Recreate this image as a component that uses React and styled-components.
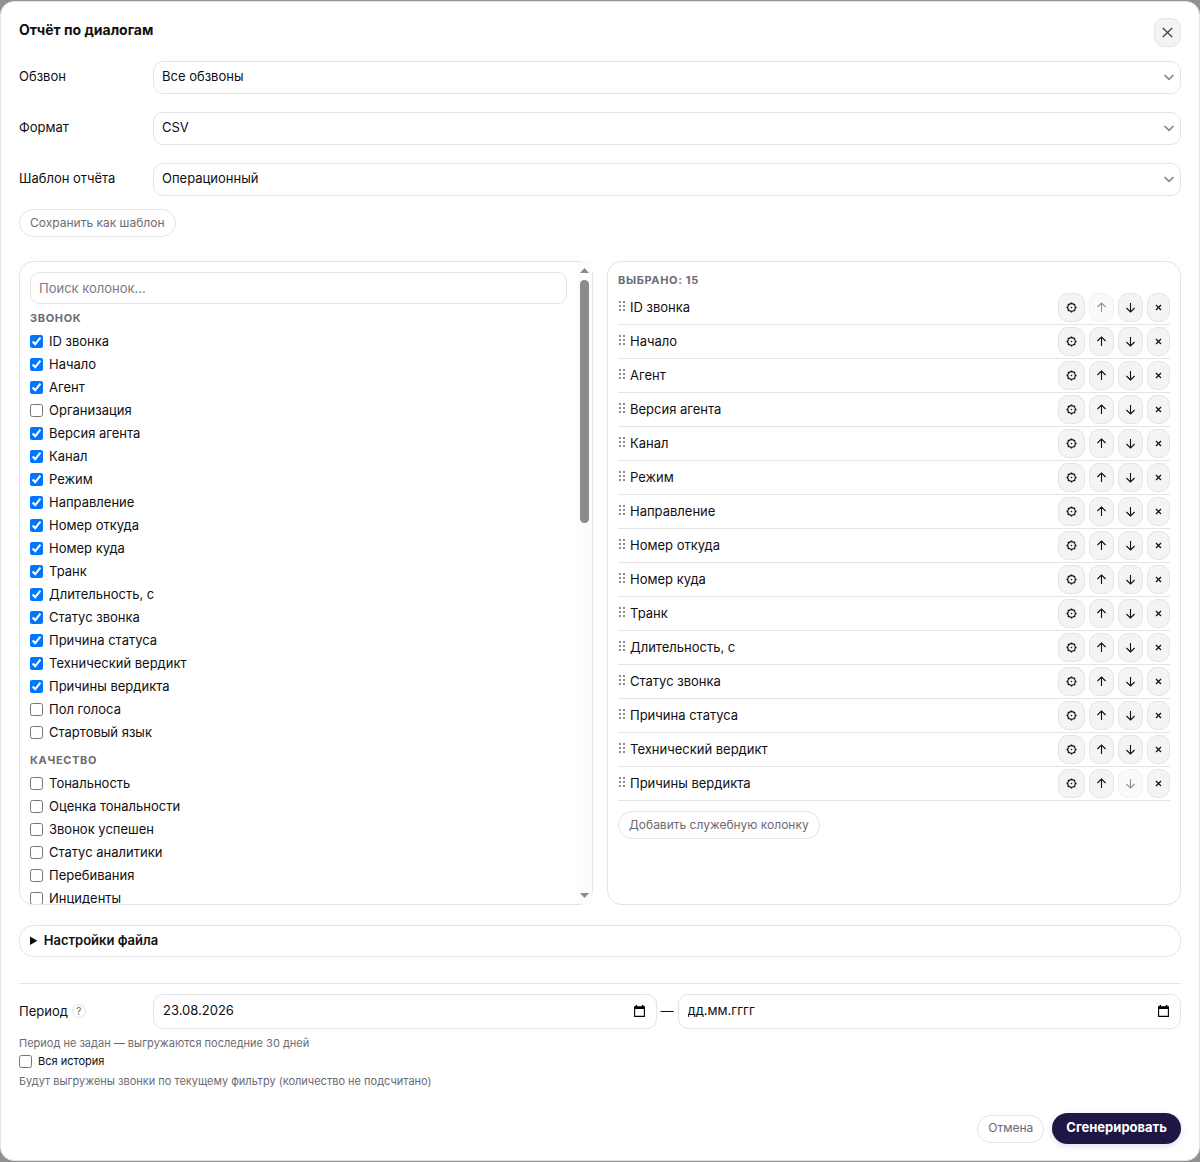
import React, { useState } from "react";
import styled, { createGlobalStyle, css } from "styled-components";

const line = "#e4e4e6";
const ink = "#0f0f12";
const muted = "#6b6b73";

const GlobalStyle = createGlobalStyle`
  *, *::before, *::after { box-sizing: border-box; }
  body {
    margin: 0;
    background: #929294;
    color: ${ink};
    font: 13px/19px Inter, "Liberation Sans", sans-serif;
  }
  button, input, select { font: inherit; color: inherit; }
`;

const Overlay = styled.div`
  display: flex;
  min-height: 100vh;
  padding: 1px 0;
`;

const Modal = styled.form`
  display: flex;
  flex-direction: column;
  flex: 1;
  min-width: 0;
  padding: 16px 18px;
  background: #fff;
  border: 1px solid ${line};
  border-radius: 14px;
`;

const Header = styled.header`
  display: flex;
  justify-content: space-between;
  align-items: flex-start;
  margin-bottom: 14px;
`;

const Title = styled.h2`
  margin: 0;
  font-size: 14px;
  line-height: 24px;
  font-weight: 700;
`;

const IconButton = styled.button`
  display: flex;
  align-items: center;
  justify-content: center;
  width: ${props => props.$width || 25}px;
  height: 29px;
  padding: 0 0 1px;
  background: #f4f4f5;
  border: 1px solid ${line};
  border-radius: 10px;

  &:disabled { opacity: 0.45; }
`;

const Fields = styled.div`
  display: grid;
  gap: 18px;
`;

const Field = styled.div`
  display: grid;
  grid-template-columns: 134px 1fr;
  align-items: center;
`;

const FieldLabel = styled.label`
  padding-bottom: 2px;
`;

const control = css`
  width: 100%;
  background: #fff;
  border: 1px solid ${line};
  border-radius: 10px;
`;

const SelectWrap = styled.div`
  position: relative;

  svg {
    position: absolute;
    right: 6px;
    top: 12px;
    pointer-events: none;
  }
`;

const Select = styled.select`
  ${control};
  display: block;
  appearance: none;
  height: 33px;
  padding: 0 28px 2px 8px;
`;

const PillButton = styled.button`
  align-self: flex-start;
  height: 28px;
  padding: 0 10px 2px;
  background: #fff;
  color: ${muted};
  border: 1px solid ${line};
  border-radius: 14px;
  font-size: 12px;
`;

const SaveButton = styled(PillButton)`
  margin: 13px 0 24px;
`;

const Columns = styled.div`
  display: grid;
  grid-template-columns: 1fr 1fr;
  gap: 14px;
  flex: 1 1 0;
  min-height: 580px;
`;

const Panel = styled.section`
  display: flex;
  min-width: 0;
  min-height: 0;
  border: 1px solid ${line};
  border-radius: 14px;
`;

const Catalog = styled.div`
  flex: 1;
  height: 0;
  min-height: 100%;
  overflow: hidden;
  padding: 10px;
  border-radius: 13px 0 0 13px;
`;

const SearchInput = styled.input`
  ${control};
  display: block;
  height: 32px;
  padding: 0 8px 1px;
  margin-bottom: 5px;

  &::placeholder { color: #7b7b80; opacity: 1; }
`;

const GroupTitle = styled.h3`
  margin: 0;
  color: ${muted};
  font-size: 11px;
  line-height: 18px;
  font-weight: 700;
  letter-spacing: 0.06em;
  text-transform: uppercase;
`;

const Group = styled.div`
  margin-bottom: 7px;
`;

const GroupItems = styled.div`
  padding-top: 3px;
`;

const CheckLabel = styled.label`
  display: flex;
  align-items: center;
  gap: 6px;
  padding: 2px 0;

  input {
    width: 13px;
    height: 13px;
    margin: 0;
    accent-color: #0075ff;
  }
`;

const HistoryLabel = styled(CheckLabel)`
  padding: 1px 0 2px;
  font-size: 11px;
`;

const ScrollTrack = styled.div`
  display: flex;
  flex-direction: column;
  align-items: center;
  width: 15px;
  padding: 6px 0;
  background: #fcfcfc;
`;

const ScrollThumb = styled.div`
  width: 9px;
  height: 243px;
  margin: 7px 0 auto;
  background: #8b8b8b;
  border-radius: 5px;
`;

const SelectedPanel = styled(Panel)`
  flex-direction: column;
  padding: 9px 10px;
`;

const SelectedList = styled.ul`
  margin: 2px 0 10px;
  padding: 0;
  list-style: none;
`;

const SelectedRow = styled.li`
  display: flex;
  align-items: center;
  gap: 4px;
  padding: 2px 0;
  border-bottom: 1px solid ${line};
`;

const RowName = styled.span`
  flex: 1;
  padding-bottom: 1px;
`;

const Settings = styled.details`
  margin-top: 20px;
  border: 1px solid ${line};
  border-radius: 14px;
`;

const Summary = styled.summary`
  padding: 5px 10px 6px;
  font-weight: 600;
`;

const Period = styled.div`
  margin-top: 26px;
  padding-top: 10px;
  border-top: 1px solid ${line};
`;

const PeriodLabel = styled.div`
  display: flex;
  align-items: center;
  gap: 4px;
  padding-bottom: 1px;
`;

const HelpBadge = styled.button`
  width: 14px;
  height: 14px;
  padding: 0;
  background: #fff;
  color: ${muted};
  border: 1px solid ${line};
  border-radius: 50%;
  font-size: 10px;
  line-height: 12px;
`;

const DateRange = styled.div`
  display: flex;
  align-items: center;
  gap: 4px;
`;

const DateBox = styled.div`
  ${control};
  display: flex;
  align-items: center;
  flex: 1;
  height: 35px;
  padding: 0 9px 2px;

  input {
    flex: 1;
    min-width: 0;
    padding: 0;
    background: none;
    border: 0;
    outline: 0;
  }

  input::placeholder { color: ${ink}; opacity: 1; }

  button {
    display: flex;
    padding: 2px;
    background: none;
    border: 0;
  }
`;

const Hint = styled.p`
  margin: 0;
  color: ${muted};
  font-size: 11px;
  line-height: 16px;
`;

const PeriodNotes = styled.div`
  margin-top: 6px;
`;

const Footer = styled.footer`
  display: flex;
  justify-content: flex-end;
  align-items: center;
  gap: 8px;
  margin-top: 24px;

  ${PillButton} { align-self: center; }
`;

const SubmitButton = styled.button`
  height: 31px;
  padding: 0 14px 2px;
  background: #1f1646;
  color: #fff;
  border: 0;
  border-radius: 16px;
  font-weight: 700;
  box-shadow: 0 2px 6px rgba(31, 22, 70, 0.14);
`;

const Chevron = () => (
  <svg width="12" height="9" viewBox="0 0 12 9" fill="none" stroke="#85858f" strokeWidth="1.7">
    <path d="M1.5 2 6 6.4 10.5 2" />
  </svg>
);

const CloseIcon = () => (
  <svg width="11" height="11" viewBox="0 0 11 11" fill="none" stroke="#3a3a3e" strokeWidth="1.1">
    <path d="M.8 1 10.2 10M10.2 1 .8 10" />
  </svg>
);

const GearIcon = () => (
  <svg width="11" height="11" viewBox="0 0 11 11" fill="none" stroke={ink}>
    <circle cx="5.5" cy="5.5" r="3.8" strokeWidth="1.2" />
    <path
      strokeWidth="1.4"
      d="M5.5 .5v1.2M5.5 9.3v1.2M.5 5.5h1.2M9.3 5.5h1.2M1.9 1.9l.9 .9M8.2 8.2l.9 .9M1.9 9.1l.9-.9M8.2 2.8l.9-.9"
    />
    <circle cx="5.5" cy="5.5" r=".8" fill={ink} stroke="none" />
  </svg>
);

const ArrowIcon = ({down}) => (
  <svg width="11" height="11" viewBox="0 0 11 11" fill="none" stroke={ink} strokeWidth="1.1">
    <path d={down ? "M5.5 1v9M1.4 6 5.5 10 9.6 6" : "M5.5 10V1M1.4 5 5.5 1 9.6 5"} />
  </svg>
);

const RemoveIcon = () => (
  <svg width="7" height="7" viewBox="0 0 7 7" fill="none" stroke={ink} strokeWidth="1.2">
    <path d="M1 1 6 6M6 1 1 6" />
  </svg>
);

const GripIcon = () => (
  <svg width="8" height="13" viewBox="0 0 8 13" fill="#8a8a90">
    <path d="M1 0h2v2H1zM5 0h2v2H5zM1 4h2v2H1zM5 4h2v2H5zM1 8h2v2H1zM5 8h2v2H5z" />
  </svg>
);

const CalendarIcon = () => (
  <svg width="11" height="12" viewBox="0 0 11 12" fill="none" stroke="#000">
    <path d="M.6 2.5h9.8v8.9H.6z" strokeWidth="1.1" />
    <path d="M0 1.2h11V4H0zM1.6 0h1.5v1.5H1.6zM7.9 0h1.5v1.5H7.9z" fill="#000" stroke="none" />
  </svg>
);

const ScrollArrow = ({down}) => (
  <svg width="9" height="5" viewBox="0 0 9 5" fill="#8b8b8b">
    <path d={down ? "M0 0h9L4.5 5z" : "M0 5h9L4.5 0z"} />
  </svg>
);

const fields = [
  { id: "campaign", label: "Обзвон", value: "Все обзвоны" },
  { id: "format", label: "Формат", value: "CSV" },
  { id: "template", label: "Шаблон отчёта", value: "Операционный" }
];

const groups = [
  {
    title: "Звонок",
    items: [
      "ID звонка", "Начало", "Агент", "Организация", "Версия агента", "Канал",
      "Режим", "Направление", "Номер откуда", "Номер куда", "Транк",
      "Длительность, с", "Статус звонка", "Причина статуса",
      "Технический вердикт", "Причины вердикта", "Пол голоса", "Стартовый язык"
    ]
  },
  {
    title: "Качество",
    items: [
      "Тональность", "Оценка тональности", "Звонок успешен",
      "Статус аналитики", "Перебивания", "Инциденты"
    ]
  }
];

const skipped = ["Организация", "Пол голоса", "Стартовый язык"];
const initialSelected = groups[0].items.filter(name => !skipped.includes(name));

const DateField = ({label, ...rest}) => (
  <DateBox>
    <input type="text" aria-label={label} placeholder="дд.мм.гггг" {...rest} />
    <button type="button" aria-label="Открыть календарь"><CalendarIcon /></button>
  </DateBox>
);

const App = () => {
  const [selected, setSelected] = useState(initialSelected);

  const toggle = name => setSelected(
    selected.includes(name) ? selected.filter(s => s !== name) : [...selected, name]
  );

  const move = (index, step) => {
    const next = [...selected];
    [next[index], next[index + step]] = [next[index + step], next[index]];
    setSelected(next);
  };

  return (
    <Overlay>
      <GlobalStyle />
      <Modal onSubmit={e => e.preventDefault()}>
        <Header>
          <Title>Отчёт по диалогам</Title>
          <IconButton type="button" $width={27} aria-label="Закрыть"><CloseIcon /></IconButton>
        </Header>

        <Fields>
          {fields.map(({id, label, value}) => (
            <Field key={id}>
              <FieldLabel htmlFor={id}>{label}</FieldLabel>
              <SelectWrap>
                <Select id={id}><option>{value}</option></Select>
                <Chevron />
              </SelectWrap>
            </Field>
          ))}
        </Fields>
        <SaveButton type="button">Сохранить как шаблон</SaveButton>

        <Columns>
          <Panel>
            <Catalog>
              <SearchInput type="text" placeholder="Поиск колонок…" aria-label="Поиск колонок" />
              {groups.map(({title, items}) => (
                <Group key={title}>
                  <GroupTitle>{title}</GroupTitle>
                  <GroupItems>
                    {items.map(name => (
                      <CheckLabel key={name}>
                        <input
                          type="checkbox"
                          checked={selected.includes(name)}
                          onChange={() => toggle(name)}
                        />
                        {name}
                      </CheckLabel>
                    ))}
                  </GroupItems>
                </Group>
              ))}
            </Catalog>
            <ScrollTrack>
              <ScrollArrow />
              <ScrollThumb />
              <ScrollArrow down />
            </ScrollTrack>
          </Panel>

          <SelectedPanel>
            <GroupTitle>Выбрано: {selected.length}</GroupTitle>
            <SelectedList>
              {selected.map((name, index) => (
                <SelectedRow key={name}>
                  <GripIcon />
                  <RowName>{name}</RowName>
                  <IconButton type="button" $width={27} aria-label="Настроить"><GearIcon /></IconButton>
                  <IconButton
                    type="button"
                    aria-label="Выше"
                    disabled={index === 0}
                    onClick={() => move(index, -1)}
                  >
                    <ArrowIcon />
                  </IconButton>
                  <IconButton
                    type="button"
                    aria-label="Ниже"
                    disabled={index === selected.length - 1}
                    onClick={() => move(index, 1)}
                  >
                    <ArrowIcon down />
                  </IconButton>
                  <IconButton type="button" $width={23} aria-label="Убрать" onClick={() => toggle(name)}>
                    <RemoveIcon />
                  </IconButton>
                </SelectedRow>
              ))}
            </SelectedList>
            <PillButton type="button">Добавить служебную колонку</PillButton>
          </SelectedPanel>
        </Columns>

        <Settings>
          <Summary>Настройки файла</Summary>
        </Settings>

        <Period>
          <Field>
            <PeriodLabel>
              Период <HelpBadge type="button">?</HelpBadge>
            </PeriodLabel>
            <DateRange>
              <DateField label="Начало периода" defaultValue="23.08.2026" />
              —
              <DateField label="Конец периода" />
            </DateRange>
          </Field>
          <PeriodNotes>
            <Hint>Период не задан — выгружаются последние 30 дней</Hint>
            <HistoryLabel><input type="checkbox" />Вся история</HistoryLabel>
            <Hint>Будут выгружены звонки по текущему фильтру (количество не подсчитано)</Hint>
          </PeriodNotes>
        </Period>

        <Footer>
          <PillButton type="button">Отмена</PillButton>
          <SubmitButton type="submit">Сгенерировать</SubmitButton>
        </Footer>
      </Modal>
    </Overlay>
  );
};

export default App;
